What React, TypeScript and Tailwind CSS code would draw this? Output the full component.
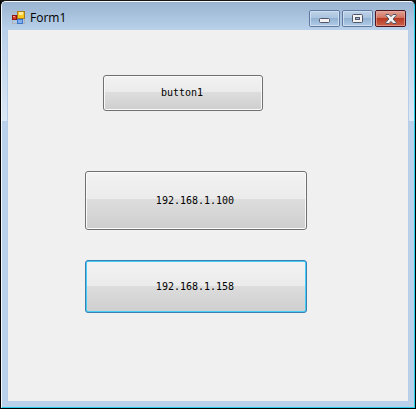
import type { ReactNode } from 'react';

function FormIcon() {
  return (
    <svg width="14" height="14" viewBox="0 0 14 14" shapeRendering="crispEdges" aria-hidden="true">
      <rect x="0.5" y="0.5" width="12" height="12" fill="none" stroke="#b0b4bb" />
      <rect x="5" y="0" width="8" height="8" fill="#a87a22" />
      <rect x="6" y="1" width="6" height="6" fill="#f8c81e" />
      <rect x="7" y="1" width="4" height="3" fill="#ffeb9a" />
      <rect x="0" y="4" width="5" height="5" fill="#8e1410" />
      <rect x="1" y="5" width="3" height="3" fill="#d8402c" />
      <rect x="1" y="5" width="2" height="1" fill="#f3a08c" />
      <rect x="5" y="8" width="6" height="5" fill="#3f74c8" />
      <rect x="6" y="9" width="4" height="3" fill="#7fb0f2" />
    </svg>
  );
}

function CaptionButton({ label, close, children }: { label: string; close?: boolean; children: ReactNode }) {
  const look = close
    ? 'border-[#4b1420] bg-linear-to-b from-[#e0a296] from-0% via-[#cf705c] via-48% to-[#d0705a]'
    : 'border-[#6179a0] bg-linear-to-b from-[#bdd2e8] from-0% via-[#a9c3df] via-48% to-[#b4cfe9]';
  return (
    <button
      type="button"
      aria-label={label}
      className={`relative flex h-[17px] w-[31px] items-center justify-center rounded-[2px] border ${look}`}
    >
      <span
        className={`absolute inset-x-0 bottom-0 h-2 bg-linear-to-b ${close ? 'from-[#b83820] to-[#cb6048]' : 'from-[#91b0d1] to-[#b0cce8]'}`}
      />
      <span className={`absolute inset-0 rounded-[1px] border ${close ? 'border-[#e9b0a4]/60' : 'border-[#d5e4f3]/80'}`} />
      <span className="relative">{children}</span>
    </button>
  );
}

function FormButton({ text, className, focused }: { text: string; className: string; focused?: boolean }) {
  return (
    <button
      type="button"
      className={`rounded-[3px] border p-px text-[10px] leading-3 text-black ${focused ? 'border-[#3c7fb1] bg-[#46cdf5]' : 'border-[#707070] bg-[#fafafa]'} ${className}`}
    >
      <span className="flex h-full items-center justify-center rounded-[1px] bg-[linear-gradient(#f2f2f2_0%,#ebebeb_48%,#dddddd_48%,#cfcfcf_100%)] pr-0.5">
        {text}
      </span>
    </button>
  );
}

// Frame edge: glass highlight on the upper part, flat colour below
function SideFrame({ right }: { right?: boolean }) {
  return (
    <div className={`w-1.5 shrink-0 bg-[#b9d1ea] ${right ? 'border-l' : 'border-r'} border-[#b5cde8]`}>
      <div className="h-[91px] bg-linear-to-b from-[#b9d0e9] to-[#dce8f5]" />
    </div>
  );
}

export default function App() {
  return (
    <div className="flex min-h-screen flex-col bg-[#151515] pt-px">
      <div className="flex grow flex-col border-x border-b border-black">
        <div className="flex grow flex-col overflow-hidden rounded-t-[5px] border border-t-[#f4f8fc] border-r-[#25cfea] border-b-[#25cfea] border-l-[#f4f8fc] bg-[#b9d1ea]">
          <header className="flex h-7 items-start justify-between bg-linear-to-b from-[#99b4d1] to-[#b9d1ea] pr-2 pl-[10px]">
            <div className="flex items-center gap-1 pt-2">
              <FormIcon />
              <h1 className="font-['Open_Sans',sans-serif] text-[12px] leading-4 text-black">Form1</h1>
            </div>
            <div className="flex gap-0.5 pt-2">
              <CaptionButton label="Minimize">
                <svg width="11" height="5" viewBox="0 0 11 5" className="mt-1">
                  <rect x="0.5" y="0.5" width="10" height="4" rx="1" fill="#f3f3f3" stroke="#535666" />
                </svg>
              </CaptionButton>
              <CaptionButton label="Maximize">
                <svg width="11" height="9" viewBox="0 0 11 9">
                  <rect x="0.5" y="0.5" width="10" height="8" rx="1" fill="#f3f3f3" stroke="#535666" />
                  <rect x="3.5" y="3.5" width="4" height="2" fill="#9ab6d6" stroke="#535666" />
                </svg>
              </CaptionButton>
              <CaptionButton label="Close" close>
                <svg width="12" height="10" viewBox="0 0 12 10">
                  <path
                    d="M1 .5H4L6 2.6 8 .5H11L11.4 1.2 8.1 5 11.4 8.8 11 9.5H8L6 7.4 4 9.5H1L.6 8.8 3.9 5 .6 1.2Z"
                    fill="#f3f3f3"
                    stroke="#535666"
                    strokeLinejoin="round"
                  />
                </svg>
              </CaptionButton>
            </div>
          </header>
          <div className="flex grow pb-1.5">
            <SideFrame />
            <main className="flex grow flex-col items-start bg-[#f0f0f0] pt-[45px] pl-[77px] font-['DejaVu_Sans_Mono',monospace]">
              <FormButton text="button1" className="ml-[18px] h-9 w-40" />
              <FormButton text="192.168.1.100" className="mt-[60px] h-[59px] w-[222px]" />
              <FormButton text="192.168.1.158" className="mt-[30px] h-[53px] w-[222px]" focused />
            </main>
            <SideFrame right />
          </div>
        </div>
      </div>
    </div>
  );
}
